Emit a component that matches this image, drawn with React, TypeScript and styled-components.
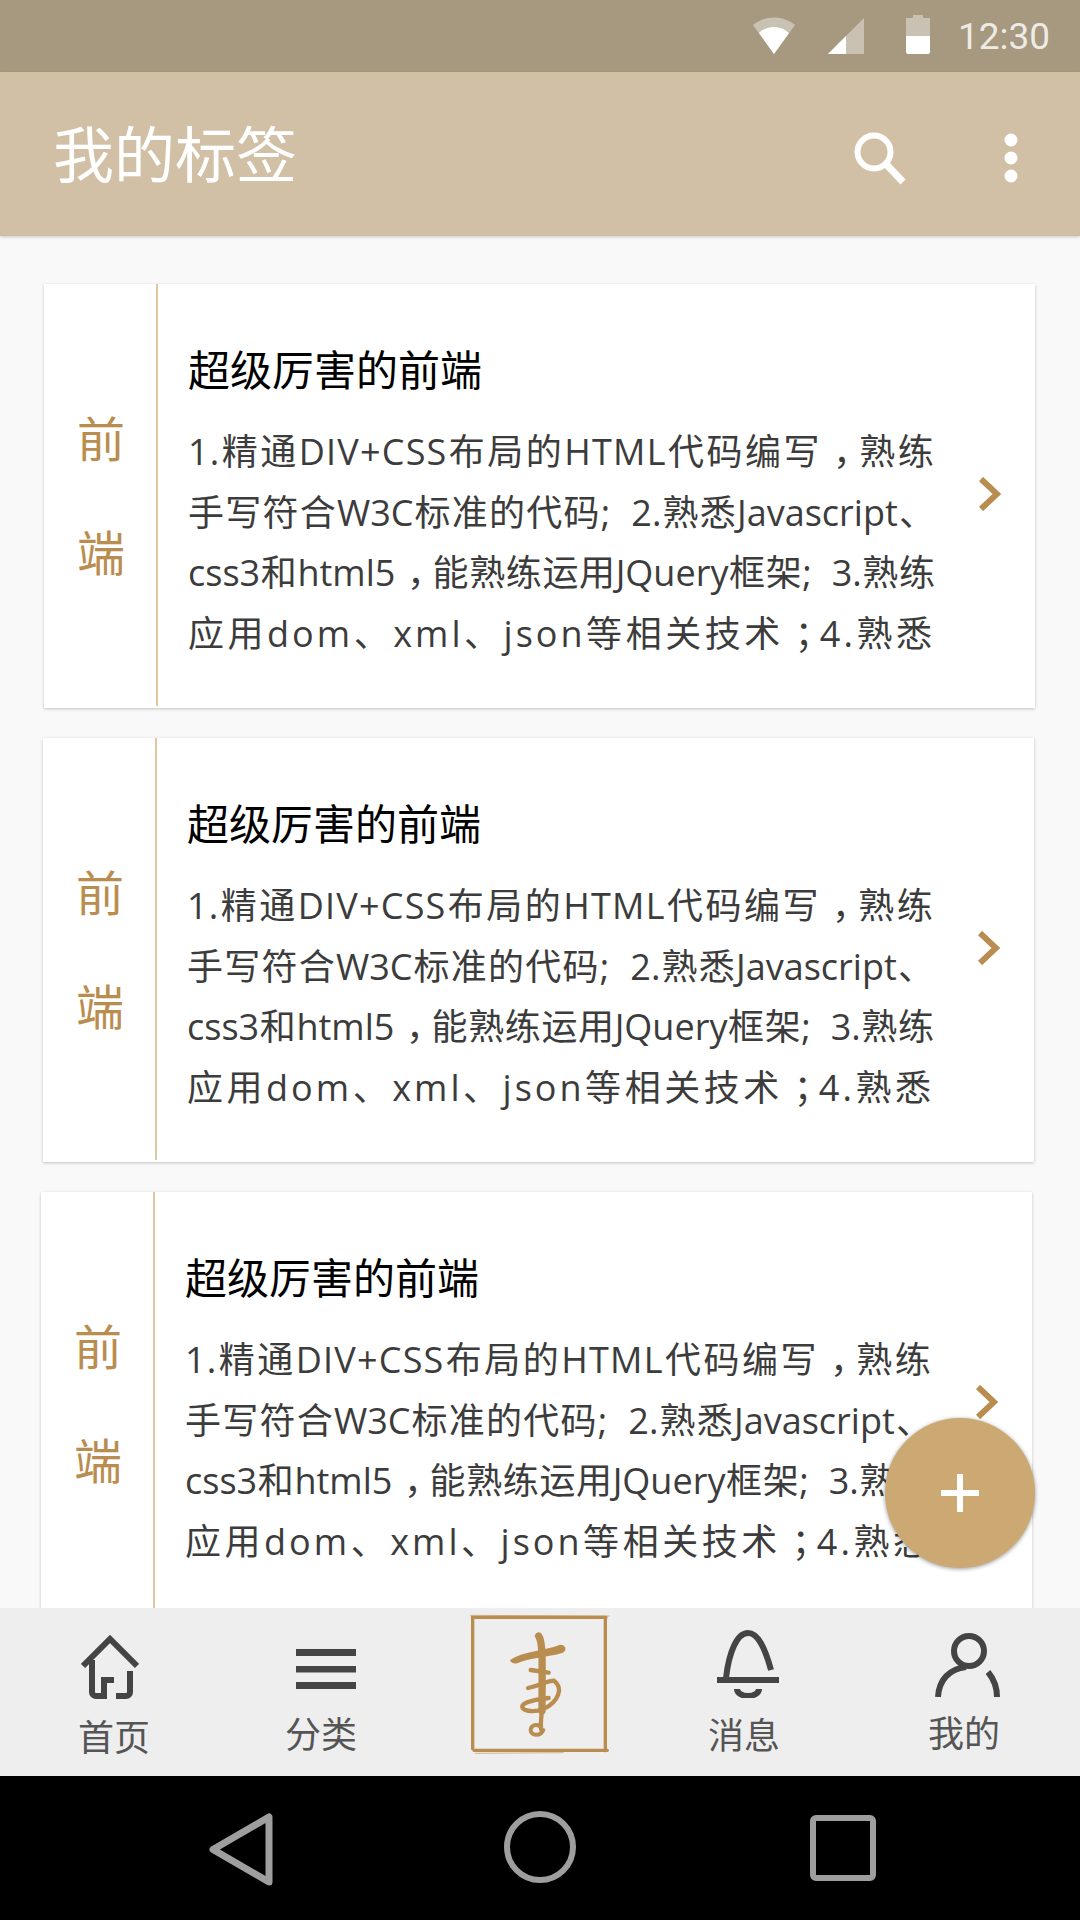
import React from 'react'
import styled, { createGlobalStyle } from 'styled-components'

const GlobalStyle = createGlobalStyle`
  html, body {
    margin: 0;
    padding: 0;
    background: #000;
  }
  * {
    box-sizing: border-box;
  }
`

const CJK = `"Open Sans", "Noto Sans CJK SC", sans-serif`

const Page = styled.div`
  position: relative;
  width: 1080px;
  height: 1920px;
  display: flex;
  flex-direction: column;
  overflow: hidden;
  font-family: ${CJK};
  background: #f9f9f9;
`

const StatusBar = styled.div`
  height: 72px;
  flex: none;
  background: #a69980;
  display: flex;
  align-items: flex-start;
  padding: 15px 0 0 753px;
`

const Time = styled.div`
  font-family: Roboto, sans-serif;
  font-size: 37px;
  line-height: 43px;
  margin-left: 28px;
  color: rgba(255, 255, 255, 0.82);
`

const AppBar = styled.div`
  height: 164px;
  flex: none;
  background: #d1c0a5;
  box-shadow: 0 1px 3px rgba(0, 0, 0, 0.2);
  display: flex;
  align-items: center;
  padding: 8px 62px 0 53px;
  z-index: 1;
`

const Heading = styled.div`
  flex: 1;
  font-size: 61px;
  line-height: 80px;
  font-weight: 400;
  color: #fff;
  margin-top: -6px;
`

const Content = styled.div`
  flex: 1;
  min-height: 0;
  overflow: hidden;
  padding-top: 48px;
  display: flex;
  flex-direction: column;
  gap: 30px;
`

const Card = styled.div<{ $left: number }>`
  flex: none;
  width: 991px;
  height: 424px;
  margin-left: ${(p) => p.$left}px;
  background: #fff;
  box-shadow: 0 1px 3px rgba(0, 0, 0, 0.22);
  display: flex;
`

const TagColumn = styled.div`
  width: 114px;
  height: 422px;
  flex: none;
  border-right: 2px solid #e0c7a2;
  display: flex;
  flex-direction: column;
  align-items: center;
  justify-content: center;
  gap: 48px;
  padding: 2px 0 0 2px;
  font-size: 48px;
  line-height: 66px;
  color: #b98d50;
`

const TextColumn = styled.div`
  width: 777px;
  flex: none;
  padding: 58px 0 0 30px;
`

const CardTitle = styled.div`
  font-size: 42px;
  line-height: 56px;
  color: #000;
  margin-bottom: 24px;
`

const BodyLine = styled.div<{ $spacing: number }>`
  width: 747px;
  height: 60.5px;
  font-size: 36px;
  line-height: 60px;
  letter-spacing: ${(p) => p.$spacing}px;
  color: #3c3c3c;
  white-space: pre-wrap;
  text-align: justify;
  text-align-last: justify;
`

// the reference's full-width comma and semicolon sit in the middle of the em box
const Punct = styled.span`
  margin-left: 11px;
  letter-spacing: -11px;
`

const ChevronSlot = styled.div`
  flex: 1;
  display: flex;
  align-items: center;
  padding: 0 0 4px 44px;
  color: #b98d50;
`

const TabBar = styled.div`
  height: 168px;
  flex: none;
  background: #eeeeee;
  display: flex;
  z-index: 1;
`

const Tab = styled.div<{ $left: number; $width: number }>`
  margin-left: ${(p) => p.$left}px;
  width: ${(p) => p.$width}px;
  flex: none;
  display: flex;
  flex-direction: column;
  align-items: center;
  color: #444;
`

const IconSlot = styled.div<{ $top: number; $height: number; $shift: number }>`
  margin-top: ${(p) => p.$top}px;
  height: ${(p) => p.$height}px;
  margin-left: ${(p) => p.$shift}px;
  display: flex;
`

const TabLabel = styled.div<{ $top: number }>`
  margin-top: ${(p) => p.$top}px;
  font-size: 36px;
  line-height: 44px;
  white-space: nowrap;
  color: #555;
`

const LogoSlot = styled.div`
  flex: none;
  margin: 6px 0 0 99px;
`

const NavBar = styled.div`
  height: 144px;
  flex: none;
  background: #000;
  display: flex;
  align-items: flex-start;
`

const NavButton = styled.div<{ $left: number; $top: number }>`
  margin: ${(p) => p.$top}px 0 0 ${(p) => p.$left}px;
  display: flex;
`

const Fab = styled.div`
  position: absolute;
  left: 885px;
  top: 1418px;
  width: 150px;
  height: 150px;
  border-radius: 50%;
  background: #cca873;
  box-shadow: 0 1px 4px rgba(0, 0, 0, 0.4);
  z-index: 2;
  display: flex;
  align-items: center;
  justify-content: center;
`

const lines = [
  {
    spacing: 1.2,
    text: (
      <>
        1.精通DIV+CSS布局的HTML代码编写<Punct>，</Punct>熟练
      </>
    ),
  },
  { spacing: 0, text: '手写符合W3C标准的代码;  2.熟悉Javascript、' },
  {
    spacing: 0,
    text: (
      <>
        css3和html5<Punct>，</Punct>能熟练运用JQuery框架;  3.熟练
      </>
    ),
  },
  {
    spacing: 3,
    text: (
      <>
        应用dom、xml、json等相关技术<Punct>；</Punct>4.熟悉
      </>
    ),
  },
]

const WifiIcon = () => (
  <svg width="42" height="39" viewBox="0 0 42 39">
    <path d="M0 10 C12 0 30 0 42 10 L21 39 Z" fill="#fff" fillOpacity="0.4" />
    <path d="M6 18 C14 10 28 10 36 18 L21 39 Z" fill="#fff" />
  </svg>
)

const SignalIcon = () => (
  <svg width="36" height="39" viewBox="0 0 36 39" style={{ marginLeft: 33 }}>
    <path d="M0 39 L36 3 V39 Z" fill="#fff" fillOpacity="0.4" />
    <path d="M0 39 L18 21 V39 Z" fill="#fff" />
  </svg>
)

const BatteryIcon = () => (
  <svg width="24" height="39" viewBox="0 0 24 39" style={{ marginLeft: 42 }}>
    <path d="M7 0 H17 V3 H24 V21 H0 V3 H7 Z" fill="#fff" fillOpacity="0.4" />
    <path d="M0 21 H24 V37 a2 2 0 0 1 -2 2 H2 a2 2 0 0 1 -2 -2 Z" fill="#fff" />
  </svg>
)

const SearchIcon = () => (
  <svg width="54" height="54" viewBox="0 0 54 54" style={{ marginRight: 97 }}>
    <circle cx="21" cy="21" r="16.5" fill="none" stroke="#fff" strokeWidth="6" />
    <path d="M33 33 L50 51" stroke="#fff" strokeWidth="7" />
  </svg>
)

const MoreIcon = () => (
  <svg width="14" height="50" viewBox="0 0 14 50">
    <circle cx="7" cy="7" r="6.5" fill="#fff" />
    <circle cx="7" cy="25" r="6.5" fill="#fff" />
    <circle cx="7" cy="43" r="6.5" fill="#fff" />
  </svg>
)

const Chevron = () => (
  <svg width="22" height="34" viewBox="0 0 22 34">
    <path d="M2 2 L18 17 L2 32" fill="none" stroke="currentColor" strokeWidth="6" />
  </svg>
)

const HomeIcon = () => (
  <svg width="58" height="64" viewBox="0 0 58 64" fill="none" stroke="currentColor" strokeWidth="6">
    <path d="M2 31 L29 4 L56 31" />
    <path d="M11 25 V57 a4 4 0 0 0 4 4 H23 V45 H33" />
    <path d="M49 36 V57 a4 4 0 0 1 -4 4 H35" />
  </svg>
)

const MenuIcon = () => (
  <svg width="60" height="40" viewBox="0 0 60 40" fill="currentColor">
    <rect width="60" height="7" />
    <rect y="17" width="60" height="6.5" />
    <rect y="33" width="60" height="7" />
  </svg>
)

const BellIcon = () => (
  <svg width="62" height="68" viewBox="0 0 62 68" fill="none" stroke="currentColor" strokeWidth="6">
    <path d="M9 48 C12 22 20 3 31 3 C41 3 48 18 54 40" />
    <path d="M0 50 H62" />
    <path d="M20 59 a11 7 0 0 0 22 0" />
  </svg>
)

const UserIcon = () => (
  <svg width="65" height="64" viewBox="0 0 65 64" fill="none" stroke="currentColor" strokeWidth="6">
    <circle cx="34" cy="18" r="15" />
    <path d="M3 64 C4 47 14 36 31 34" />
    <path d="M53 39 C58 45 62 53 62 64" />
  </svg>
)

// calligraphy mark in the middle of the tab bar, traced from the reference
const Logo = () => (
  <svg width="140" height="140" viewBox="30 40 420 420">
    <g fill="none" stroke="#b98d50" strokeLinecap="round">
      <path d="M37 50 H438 M38 50 V444 M436 52 V450 M42 449 H442" strokeWidth="10" />
      <path d="M30 44 L450 46 M46 458 L310 456" strokeWidth="3" strokeOpacity="0.6" />
      <path d="M236 106 C250 125 246 200 246 330" strokeWidth="22" />
      <path d="M246 320 C244 360 240 370 244 388" strokeWidth="13" />
      <path d="M212 208 L266 216" strokeWidth="13" />
      <path d="M204 262 C240 254 262 240 282 240 C312 262 294 304 252 324 C220 338 180 330 188 314 C196 302 232 296 266 292" strokeWidth="13" />
      <path d="M244 384 C238 368 214 370 212 388 C212 406 242 408 250 388" strokeWidth="12" />
    </g>
    <path d="M150 178 C190 150 260 150 300 132 C320 132 322 152 304 158 C260 170 200 174 172 188 C160 190 152 186 150 178 Z" fill="#b98d50" />
  </svg>
)

const BackIcon = () => (
  <svg width="64" height="73" viewBox="0 0 64 73">
    <path d="M60 4 V69 L4 36.5 Z" fill="none" stroke="#9e9e9e" strokeWidth="7" strokeLinejoin="round" />
  </svg>
)

const HomeNavIcon = () => (
  <svg width="72" height="72" viewBox="0 0 72 72">
    <circle cx="36" cy="36" r="33" fill="none" stroke="#9e9e9e" strokeWidth="6" />
  </svg>
)

const RecentIcon = () => (
  <svg width="66" height="66" viewBox="0 0 66 66">
    <rect x="3" y="3" width="60" height="60" rx="3" fill="none" stroke="#9e9e9e" strokeWidth="6" />
  </svg>
)

const TagCard = ({ left }: { left: number }) => (
  <Card $left={left}>
    <TagColumn>
      <div>前</div>
      <div>端</div>
    </TagColumn>
    <TextColumn>
      <CardTitle>超级厉害的前端</CardTitle>
      {lines.map((line, i) => (
        <BodyLine key={i} $spacing={line.spacing}>
          {line.text}
        </BodyLine>
      ))}
    </TextColumn>
    <ChevronSlot>
      <Chevron />
    </ChevronSlot>
  </Card>
)

export default function App() {
  return (
    <Page>
      <GlobalStyle />
      <StatusBar>
        <WifiIcon />
        <SignalIcon />
        <BatteryIcon />
        <Time>12:30</Time>
      </StatusBar>
      <AppBar>
        <Heading>我的标签</Heading>
        <SearchIcon />
        <MoreIcon />
      </AppBar>
      <Content>
        <TagCard left={44} />
        <TagCard left={43} />
        <TagCard left={41} />
      </Content>
      <TabBar>
        <Tab $left={64} $width={100}>
          <IconSlot $top={27} $height={64} $shift={-8}>
            <HomeIcon />
          </IconSlot>
          <TabLabel $top={17}>首页</TabLabel>
        </Tab>
        <Tab $left={107} $width={100}>
          <IconSlot $top={41} $height={40} $shift={10}>
            <MenuIcon />
          </IconSlot>
          <TabLabel $top={24}>分类</TabLabel>
        </Tab>
        <LogoSlot>
          <Logo />
        </LogoSlot>
        <Tab $left={84} $width={100}>
          <IconSlot $top={22} $height={68} $shift={8}>
            <BellIcon />
          </IconSlot>
          <TabLabel $top={16}>消息</TabLabel>
        </Tab>
        <Tab $left={120} $width={100}>
          <IconSlot $top={25} $height={64} $shift={7}>
            <UserIcon />
          </IconSlot>
          <TabLabel $top={15}>我的</TabLabel>
        </Tab>
      </TabBar>
      <NavBar>
        <NavButton $left={209} $top={37}>
          <BackIcon />
        </NavButton>
        <NavButton $left={231} $top={35}>
          <HomeNavIcon />
        </NavButton>
        <NavButton $left={234} $top={39}>
          <RecentIcon />
        </NavButton>
      </NavBar>
      <Fab>
        <svg width="38" height="38" viewBox="0 0 38 38">
          <path d="M19 0 V38 M0 19 H38" stroke="#fff" strokeWidth="6" />
        </svg>
      </Fab>
    </Page>
  )
}
